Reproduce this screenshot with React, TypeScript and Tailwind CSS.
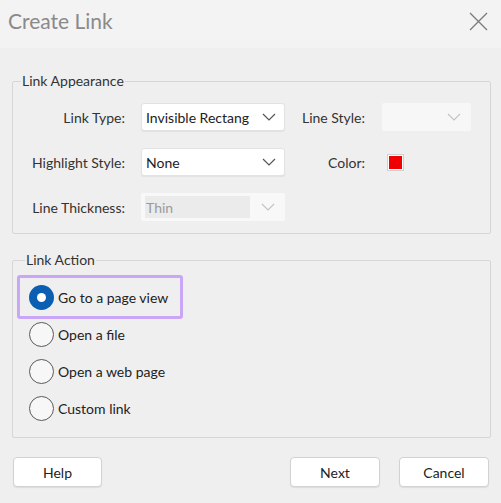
const font = { fontFamily: 'Lato, "Noto Sans", sans-serif' };

// small down chevron used by the combo boxes
function Chevron({ muted = false }: { muted?: boolean }) {
  return (
    <svg width="14" height="8" viewBox="0 0 14 8" className="shrink-0">
      <polyline
        points="1,1 7,7 13,1"
        fill="none"
        stroke={muted ? '#c4c4c4' : '#555'}
        strokeWidth="1.2"
      />
    </svg>
  );
}

function CloseIcon() {
  return (
    <svg width="19" height="19" viewBox="0 0 19 19">
      <path d="M1 1 L18 18 M18 1 L1 18" stroke="#7a7a7a" strokeWidth="1.3" fill="none" />
    </svg>
  );
}

function Select({ value, width }: { value: string; width: string }) {
  return (
    <div className={`${width} h-7 flex items-center bg-white border border-[#e2e2e2] rounded-[3px] shadow-[0_1px_1px_rgba(0,0,0,0.06)] pl-[4px] pr-[8px]`}>
      <div className="flex-1 whitespace-nowrap text-[14px] text-[#222]">{value}</div>
      <div className="pl-[8px]">
        <Chevron />
      </div>
    </div>
  );
}

function Radio({ checked = false }: { checked?: boolean }) {
  if (checked) {
    return (
      <div className="w-[25px] h-[25px] rounded-full bg-[#0b5fb3] flex items-center justify-center shrink-0">
        <div className="w-[9px] h-[9px] rounded-full bg-white" />
      </div>
    );
  }
  return <div className="w-[25px] h-[25px] rounded-full border-[1.5px] border-[#5a5a5a] bg-[#f7f7f7] shrink-0" />;
}

export default function App() {
  return (
    <div className="w-[501px] h-[503px] bg-[#efefef] text-[#333] flex flex-col" style={font}>
      {/* Title bar */}
      <div className="h-12 bg-[#f3f3f3] flex items-center justify-between pl-2 pr-[13px] pb-[6px]">
        <span className="text-[21px] text-[#8a8a8a]">Create Link</span>
        <CloseIcon />
      </div>

      {/* Link Appearance */}
      <fieldset className="ml-3 mr-[10px] mt-[23px] border border-[#d6d6d6] rounded-[2px] px-0 pt-3 pb-3">
        <legend className="ml-2 px-[1px] text-[14px] leading-5 text-[#333]">Link Appearance</legend>
        <div className="flex flex-col gap-[17px] text-[14px]">
          <div className="flex items-center h-7">
            <span className="w-[112px] text-right">Link Type:</span>
            <div className="ml-4">
              <Select value="Invisible Rectang" width="w-[144px]" />
            </div>
            <span className="w-[64px] ml-4 text-right">Line Style:</span>
            <div className="ml-[17px] w-[89px] h-7 bg-[#f7f7f7] rounded-[2px] flex items-center justify-end pr-[10px]">
              <Chevron muted />
            </div>
          </div>
          <div className="flex items-center h-7">
            <span className="w-[112px] text-right">Highlight Style:</span>
            <div className="ml-4">
              <Select value="None" width="w-[144px]" />
            </div>
            <span className="w-[64px] ml-4 text-right">Color:</span>
            <div className="ml-[22px] w-[17px] h-[17px] bg-white border border-[#d0d0d0] p-[1px]">
              <div className="w-full h-full bg-[#f00000]" />
            </div>
          </div>
          <div className="flex items-center h-7">
            <span className="w-[112px] text-right">Line Thickness:</span>
            <div className="ml-4 w-[144px] h-7 bg-[#f8f8f8] rounded-[2px] flex items-center pr-[10px]">
              <div className="w-[105px] h-[22px] ml-[4px] bg-[#ebebeb] text-[#9a9a9a] flex items-center pl-[1px]">Thin</div>
              <div className="flex-1 flex justify-end">
                <Chevron muted />
              </div>
            </div>
          </div>
        </div>
      </fieldset>

      {/* Link Action */}
      <fieldset className="ml-3 mr-[10px] mt-4 border border-[#d6d6d6] rounded-[2px] pl-[4px] pr-0 pt-[5px] pb-4">
        <legend className="ml-2 px-[1px] text-[14px] leading-5 text-[#333]">Link Action</legend>
        <div className="flex flex-col text-[14px] text-[#222]">
          <div className="w-[166px] h-[44px] border-[3px] border-[#c9a6f6] rounded-[3px] flex items-center pl-[9px] gap-[4px]">
            <Radio checked />
            <span>Go to a page view</span>
          </div>
          <div className="flex flex-col gap-[11px] mt-[2px] pl-3">
            {['Open a file', 'Open a web page', 'Custom link'].map((label) => (
              <div key={label} className="flex items-center h-[26px] gap-[4px]">
                <Radio />
                <span>{label}</span>
              </div>
            ))}
          </div>
        </div>
      </fieldset>

      {/* Buttons */}
      <div className="flex items-center justify-between mt-[19px] ml-[13px] mr-3 text-[14px] text-[#222]">
        <button className="w-[89px] h-[30px] bg-white border border-[#d2d2d2] rounded-[4px] shadow-[0_1px_1px_rgba(0,0,0,0.08)]">Help</button>
        <div className="flex gap-[19px]">
          <button className="w-[90px] h-[30px] bg-white border border-[#d2d2d2] rounded-[4px] shadow-[0_1px_1px_rgba(0,0,0,0.08)]">Next</button>
          <button className="w-[90px] h-[30px] bg-white border border-[#d2d2d2] rounded-[4px] shadow-[0_1px_1px_rgba(0,0,0,0.08)]">Cancel</button>
        </div>
      </div>
    </div>
  );
}
